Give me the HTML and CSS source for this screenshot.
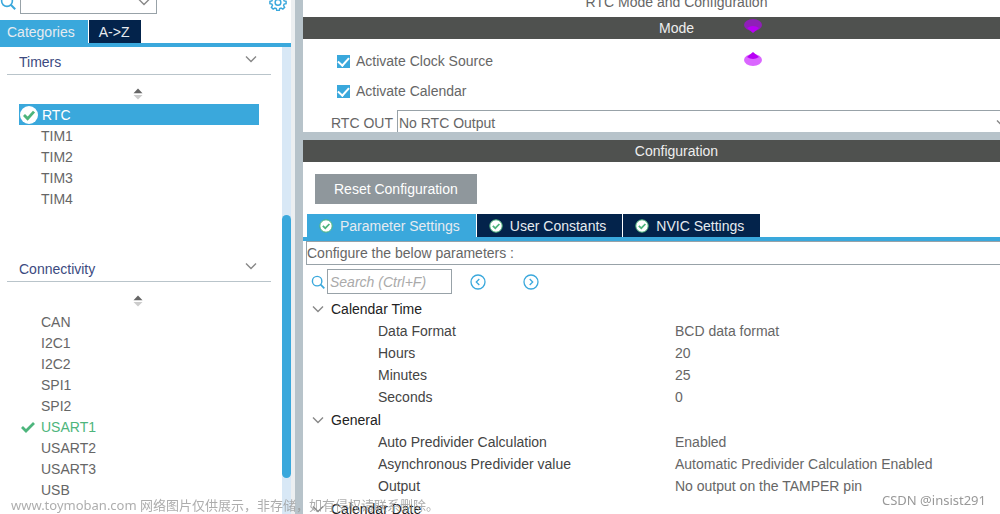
FILE: index.html
```
<!DOCTYPE html>
<html lang="en">
<head>
	<meta charset="UTF-8">
	<title>RTC Mode and Configuration</title>
	<link rel="stylesheet" href="styles.css">
</head>
<body>
	<!-- shared icons -->
	<svg class="sprite" aria-hidden="true">
		<symbol id="search" viewBox="0 0 16 16">
			<circle cx="7" cy="7" r="5.4" fill="none" stroke="currentColor" stroke-width="1.6"/>
			<path d="M10.8 10.8L15.2 15.2" stroke="currentColor" stroke-width="2"/>
		</symbol>
		<symbol id="chevron" viewBox="0 0 12 8">
			<path d="M1 1.5L6 6.5L11 1.5" fill="none" stroke="currentColor" stroke-width="1.4"/>
		</symbol>
		<symbol id="sort" viewBox="0 0 10 12">
			<path d="M5 0.5L9.5 5.2H0.5Z" fill="#666"/>
			<path d="M5 11.5L9.5 7H0.5Z" fill="#ccc"/>
		</symbol>
		<symbol id="ok" viewBox="0 0 14 14">
			<circle cx="7" cy="7" r="6.2" fill="#fff" stroke="#4db57c" stroke-width="1"/>
			<path d="M3.8 6.8L6.3 9.2L10.4 5" fill="none" stroke="#4db57c" stroke-width="1.7"/>
		</symbol>
	</svg>

	<div class="app">
		<aside class="sidebar">
			<div class="toolbar">
				<svg class="icon-search"><use href="#search"/></svg>
				<div class="combo">
					<input type="text" aria-label="Search peripheral">
					<svg class="chevron"><use href="#chevron"/></svg>
				</div>
				<button class="gear" aria-label="Settings">
					<svg viewBox="0 0 20 20">
						<path d="M8.6 1.5h2.8l.5 2.3 1.5.6 2-1.2 2 2-1.2 2 .6 1.5 2.2.5v2.7l-2.2.5-.6 1.5 1.2 2-2 2-2-1.2-1.5.6-.5 2.2H8.6l-.5-2.2-1.5-.6-2 1.2-2-2 1.2-2-.6-1.5L1 11.9V9.2l2.2-.5.6-1.5-1.2-2 2-2 2 1.2 1.5-.6z"/>
						<circle cx="10" cy="10.5" r="3.2"/>
					</svg>
				</button>
			</div>
			<div class="tabs">
				<button class="tab active">Categories</button>
				<button class="tab">A-&gt;Z</button>
			</div>
			<div class="side-body">
				<div class="groups">
					<section class="group">
						<h2>Timers <svg class="chevron"><use href="#chevron"/></svg></h2>
						<div class="sort"><svg><use href="#sort"/></svg></div>
						<ul>
							<li class="selected"><span class="mark round"><svg viewBox="0 0 14 14"><path d="M2 7L5.6 10.6L12 3.6"/></svg></span><a href="#">RTC</a></li>
							<li><a href="#">TIM1</a></li>
							<li><a href="#">TIM2</a></li>
							<li><a href="#">TIM3</a></li>
							<li><a href="#">TIM4</a></li>
						</ul>
					</section>
					<section class="group">
						<h2>Connectivity <svg class="chevron"><use href="#chevron"/></svg></h2>
						<div class="sort"><svg><use href="#sort"/></svg></div>
						<ul>
							<li><a href="#">CAN</a></li>
							<li><a href="#">I2C1</a></li>
							<li><a href="#">I2C2</a></li>
							<li><a href="#">SPI1</a></li>
							<li><a href="#">SPI2</a></li>
							<li class="enabled"><span class="mark"><svg viewBox="0 0 14 14"><path d="M1 7L5 11L13 3"/></svg></span><a href="#">USART1</a></li>
							<li><a href="#">USART2</a></li>
							<li><a href="#">USART3</a></li>
							<li><a href="#">USB</a></li>
						</ul>
					</section>
				</div>
				<div class="track"><div class="thumb"></div></div>
			</div>
		</aside>

		<main class="main">
			<section class="mode">
				<h1>RTC Mode and Configuration</h1>
				<h2 class="bar">Mode</h2>
				<svg class="pins" viewBox="0 0 18 48">
					<ellipse cx="9" cy="7" rx="9" ry="6" fill="#8f1fb8"/>
					<path d="M3 10Q9 6 15 10L9 15Z" fill="#b800f5"/>
					<ellipse cx="9" cy="42" rx="9" ry="6" fill="#da66ff"/>
					<path d="M9 34L15 39Q9 43 3 39Z" fill="#b800f5"/>
				</svg>
				<div class="checks">
					<label><input type="checkbox" checked> Activate Clock Source</label>
					<label><input type="checkbox" checked> Activate Calendar</label>
				</div>
				<div class="field">
					<label for="rtc-out">RTC OUT</label>
					<div class="select">
						<select id="rtc-out">
							<option>No RTC Output</option>
						</select>
						<svg class="chevron"><use href="#chevron"/></svg>
					</div>
				</div>
			</section>

			<section class="config">
				<h2 class="bar">Configuration</h2>
				<button class="reset">Reset Configuration</button>
				<div class="tabs">
					<button class="tab active"><svg><use href="#ok"/></svg>Parameter Settings</button>
					<button class="tab"><svg><use href="#ok"/></svg>User Constants</button>
					<button class="tab"><svg><use href="#ok"/></svg>NVIC Settings</button>
				</div>
				<p class="hint">Configure the below parameters :</p>
				<div class="find">
					<svg class="icon-search"><use href="#search"/></svg>
					<input type="text" placeholder="Search (Ctrl+F)" aria-label="Search parameters">
					<button aria-label="Previous"><svg viewBox="0 0 16 16"><circle cx="8" cy="8" r="7"/><path d="M9.3 5L6.3 8L9.3 11"/></svg></button>
					<button aria-label="Next"><svg viewBox="0 0 16 16"><circle cx="8" cy="8" r="7"/><path d="M6.7 5L9.7 8L6.7 11"/></svg></button>
				</div>
				<table class="params">
					<tbody>
						<tr><th colspan="2"><svg class="chevron"><use href="#chevron"/></svg>Calendar Time</th></tr>
						<tr><td>Data Format</td><td>BCD data format</td></tr>
						<tr><td>Hours</td><td>20</td></tr>
						<tr><td>Minutes</td><td>25</td></tr>
						<tr><td>Seconds</td><td>0</td></tr>
					</tbody>
					<tbody>
						<tr><th colspan="2"><svg class="chevron"><use href="#chevron"/></svg>General</th></tr>
						<tr><td>Auto Predivider Calculation</td><td>Enabled</td></tr>
						<tr><td>Asynchronous Predivider value</td><td>Automatic Predivider Calculation Enabled</td></tr>
						<tr><td>Output</td><td>No output on the TAMPER pin</td></tr>
					</tbody>
					<tbody>
						<tr><th colspan="2"><svg class="chevron"><use href="#chevron"/></svg>Calendar Date</th></tr>
					</tbody>
				</table>
			</section>
		</main>
	</div>

	<div class="watermark left"><span>www.toymoban.com</span> <span lang="zh-CN">网络图片仅供展示，非存储，如有侵权请联系删除。</span></div>
	<div class="watermark right">CSDN @insist291</div>
</body>
</html>
```
FILE: styles.css
```
*{margin: 0;padding: 0;box-sizing: border-box;}
ul{list-style: none;}
a{color: inherit;text-decoration: none;}
h1,h2,th{font-size: inherit;font-weight: normal;}
svg{display: block;flex: none;}
button,input,select{font: inherit;color: inherit;border: 0;border-radius: 0;background: none;}
body{font: 14px/22px "Liberation Sans", Arial, sans-serif;color: #666;background: #fff;overflow: hidden;}
.sprite{display: none;}
.app{display: flex;height: 100vh;overflow: hidden;}
.chevron{width: 12px;height: 8px;color: #888;}
.icon-search{width: 14px;height: 14px;color: #3aa8dc;}

/* tabs */
.tabs{display: flex;gap: 1px;border-bottom: 4px solid #3aa8dc;}
.tab{display: flex;align-items: center;height: 23px;background: #03234b;color: #e6ebf0;white-space: nowrap;}
.tab.active{background: #3aa8dc;}

/* sidebar */
.sidebar{display: flex;flex-direction: column;flex: none;width: 295px;border-right: 4px solid #eceff1;}
.toolbar{display: flex;align-items: center;flex: none;height: 36px;margin-top: -16px;padding-right: 4px;}
.toolbar .icon-search{width: 16px;height: 16px;margin-right: 4px;}
.combo{display: flex;align-items: center;width: 137px;height: 24px;padding-right: 6px;border: 1px solid #98a2a8;}
.combo input{flex: 1;min-width: 0;}
.gear{margin-left: auto;}
.gear svg{width: 18px;height: 18px;fill: none;stroke: #3aa8dc;stroke-width: 1.6;}
.sidebar .tab{padding: 0 13px 0 7px;}
.sidebar .tab + .tab{padding: 0 12px 0 10px;}
.side-body{display: flex;flex: 1;min-height: 0;}
.groups{flex: 1;padding: 0 11px 0 7px;overflow: hidden;}
.group{margin-bottom: 45px;}
.group h2{display: flex;justify-content: space-between;height: 28px;padding: 4px 14px 0 12px;border-bottom: 1px solid #b9c4ca;color: #3c4a80;}
.group h2 .chevron{margin-top: 4px;}
.sort{display: flex;justify-content: center;padding: 13px 2px 4px 0;}
.sort svg{width: 10px;height: 12px;}
.group ul{margin: 0 12px;}
.group li{display: flex;align-items: center;height: 21px;padding-left: 22px;}
.group .mark{display: flex;align-items: center;justify-content: center;width: 18px;height: 18px;margin-right: 4px;border-radius: 50%;}
.mark svg{width: 14px;height: 14px;fill: none;stroke: #4db57c;stroke-width: 2.8;}
.mark.round{background: #fff;}
.group li.selected{padding-left: 1px;background: #3aa8dc;color: #fff;}
.group li.enabled{padding-left: 0;color: #4db57c;}
.track{width: 9px;padding: 168px 0 36px;background: #d8e8f6;}
.thumb{height: 100%;border-radius: 5px;background: #3aa8dc;}

/* right side, runs on past the window edge */
.main{display: flex;flex-direction: column;flex: 1;min-width: 0;margin-right: -50px;border-left: 8px solid #b7c3ca;}
.mode{position: relative;flex: none;height: 132px;overflow: hidden;}
.mode h1{height: 17px;line-height: 5px;text-align: center;}
.bar{height: 22px;line-height: 23px;background: #4f514f;color: #eee;text-align: center;}
.pins{position: absolute;top: 18px;left: 441px;width: 18px;height: 48px;}
.checks{padding: 7px 0 0 34px;}
.checks label{display: flex;align-items: center;gap: 6px;height: 30px;}
.checks input{display: flex;justify-content: center;appearance: none;width: 13px;height: 13px;background: #3aa8dc;}
.checks input:checked::after{content: "";width: 5px;height: 9px;border: solid #fff;border-width: 0 2px 2px 0;transform: rotate(42deg);}
.field{display: flex;align-items: center;gap: 4px;margin-top: 4px;padding: 0 36px 0 28px;white-space: nowrap;}
.select{display: flex;align-items: center;flex: 1;height: 26px;padding-right: 5px;border: 1px solid #98a2a8;}
.select select{flex: 1;appearance: none;padding-left: 1px;}
.config{flex: 1;min-height: 0;border-top: 8px solid #b7c3ca;}
.reset{display: block;height: 30px;margin: 12px 0 10px 12px;padding: 0 19px;background: #8f979c;color: #fff;}
.config .tabs{padding-left: 4px;}
.config .tab{gap: 7px;padding: 0 16px 0 12px;}
.config .tab svg{width: 14px;height: 14px;}
.hint{height: 24px;margin-left: 3px;border: 1px solid #98a2a8;line-height: 23px;}
.find{display: flex;align-items: center;height: 33px;padding-left: 8px;}
.find input{width: 125px;height: 25px;margin: 0 18px 0 2px;padding-left: 2px;border: 1px solid #98a2a8;}
.find input::placeholder{color: #aaa;font-style: italic;}
.find button{margin-right: 37px;}
.find button svg{width: 16px;height: 16px;fill: none;stroke: #3aa8dc;stroke-width: 1.3;}
.params{width: 100%;border-collapse: collapse;}
.params th{padding-left: 28px;color: #222;text-align: left;}
.params th .chevron{float: left;margin: 7px 0 0 -19px;}
.params td:first-child{width: 372px;padding-left: 75px;color: #444;}
.params tbody + tbody th{padding-top: 1px;}

.watermark{position: fixed;color: #999;white-space: nowrap;}
.watermark.left{left: 11px;bottom: 0;font: 13px/18px "Noto Sans", "Noto Sans CJK SC", sans-serif;opacity: 0.8;}
.watermark.right{right: 14px;bottom: 4px;font: 13px/20px "Noto Sans", sans-serif;}
```
